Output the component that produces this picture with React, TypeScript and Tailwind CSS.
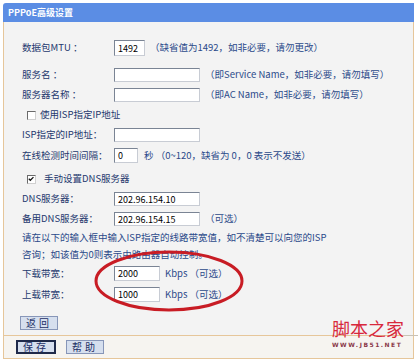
import React from "react";

const font = { fontFamily: '"Noto Sans CJK SC", "Liberation Sans", sans-serif' };

function Input({ w, h = 14, value = "" }: { w: number; h?: number; value?: string }) {
  return (
    <div
      className="bg-white border border-[#7a8494] border-r-[#c8ccd4] border-b-[#c8ccd4] text-[9px] leading-none text-black flex items-center pl-[3px] shrink-0"
      style={{ width: w, height: h }}
    >
      {value}
    </div>
  );
}

function Row({ label, children, mt }: { label: string; children?: React.ReactNode; mt: string }) {
  return (
    <div className={`flex items-center ${mt}`}>
      <div className="w-[92px] shrink-0 text-[#24386e]">{label}</div>
      {children}
    </div>
  );
}

function Check({ checked }: { checked?: boolean }) {
  return (
    <div className="w-[9px] h-[9px] bg-white border border-[#6a6a6a] border-r-[#d0d0d0] border-b-[#d0d0d0] relative shrink-0">
      {checked && (
        <svg viewBox="0 0 9 9" className="absolute left-0 top-0 w-[7px] h-[7px]">
          <path d="M1 3.5 L3 5.5 L7 1.5" stroke="#111" strokeWidth="1.6" fill="none" />
        </svg>
      )}
    </div>
  );
}

function Btn({ children, focus }: { children: React.ReactNode; focus?: boolean }) {
  return (
    <div
      className={`h-[14px] px-[5px] flex items-center justify-center bg-[#d6dfee] text-[#1d2f66] text-[10px] leading-none tracking-[3px] ${
        focus ? "border-2 border-[#1f2a4a]" : "border border-[#8796b8]"
      }`}
    >
      {children}
    </div>
  );
}

export default function App() {
  return (
    <div className="w-[418px] h-[362px] bg-white relative overflow-hidden text-[9.5px] leading-none" style={font}>
      <div className="pt-[3px] pl-[3px] w-[414px]">
        <div className="h-[19px] bg-[#5b8de4] rounded-tl-[3px] flex items-center pl-[5px] text-white text-[9px] font-bold">
          PPPoE高级设置
        </div>
        <div className="bg-[#f3f3f3] border-x border-[#e6c69a] pl-[18px] pt-[18px] h-[313px] text-[#2b4a8a]">
          <Row label="数据包MTU ：" mt="mt-0">
            <Input w={31} h={16} value="1492" />
            <span className="ml-[5px]">（缺省值为1492，如非必要，请勿更改）</span>
          </Row>
          <Row label="服务名 ：" mt="mt-[12px]">
            <Input w={86} />
            <span className="ml-[5px]">（即Service Name，如非必要，请勿填写）</span>
          </Row>
          <Row label="服务器名称 ：" mt="mt-[6px]">
            <Input w={86} />
            <span className="ml-[5px]">（即AC Name，如非必要，请勿填写）</span>
          </Row>
          <div className="flex items-center h-[14px] mt-[6px] pl-[5px] text-[#24386e]">
            <Check />
            <span className="ml-[4px]">使用ISP指定IP地址</span>
          </div>
          <Row label="ISP指定的IP地址：" mt="mt-[6px]">
            <Input w={86} />
          </Row>
          <Row label="在线检测时间间隔：" mt="mt-[6px]">
            <Input w={24} h={15} value="0" />
            <span className="ml-[6px]">秒 （0~120，缺省为 0，0 表示不发送）</span>
          </Row>
          <div className="flex items-center h-[14px] mt-[9px] pl-[5px] text-[#24386e]">
            <Check checked />
            <span className="ml-[8px]">手动设置DNS服务器</span>
          </div>
          <Row label="DNS服务器：" mt="mt-[6px]">
            <Input w={86} value="202.96.154.10" />
          </Row>
          <Row label="备用DNS服务器：" mt="mt-[6px]">
            <Input w={86} value="202.96.154.15" />
            <span className="ml-[5px]">（可选）</span>
          </Row>
          <div className="mt-[3px] leading-[17px] text-[#2b4a8a]">
            <div>请在以下的输入框中输入ISP指定的线路带宽值，如不清楚可以向您的ISP</div>
            <div>咨询；如该值为0则表示由路由器自动控制。</div>
          </div>
          <Row label="下载带宽：" mt="mt-[3px]">
            <Input w={46} h={15} value="2000" />
            <span className="ml-[5px]">Kbps （可选）</span>
          </Row>
          <Row label="上载带宽：" mt="mt-[6px]">
            <Input w={46} h={15} value="1000" />
            <span className="ml-[5px]">Kbps （可选）</span>
          </Row>
          <div className="mt-[14px] flex -ml-[2px]">
            <Btn>返回</Btn>
          </div>
        </div>
        <div className="bg-[#f6f4f0] border border-[#e6c69a] h-[24px] flex items-center pl-[12px] gap-[10px]">
          <Btn focus>保存</Btn>
          <Btn>帮助</Btn>
        </div>
      </div>

      <svg className="absolute left-0 top-0 pointer-events-none" width="418" height="362">
        <ellipse cx="169" cy="281" rx="73" ry="29" fill="none" stroke="#c81c24" strokeWidth="3" />
        <line x1="404" y1="335.5" x2="418" y2="335.5" stroke="#c9c2b6" strokeWidth="1" />
      </svg>

      <div className="absolute left-[332px] top-[318px] flex flex-col items-start">
        <div className="text-[18px] leading-[20px] text-[#d8283c]">脚本之家</div>
        <div className="text-[6px] leading-none font-bold tracking-[1.5px] text-[#8a3848] mt-[4px]" style={{ fontFamily: '"DejaVu Sans", sans-serif' }}>
          WWW.JB51.NET
        </div>
      </div>
    </div>
  );
}
